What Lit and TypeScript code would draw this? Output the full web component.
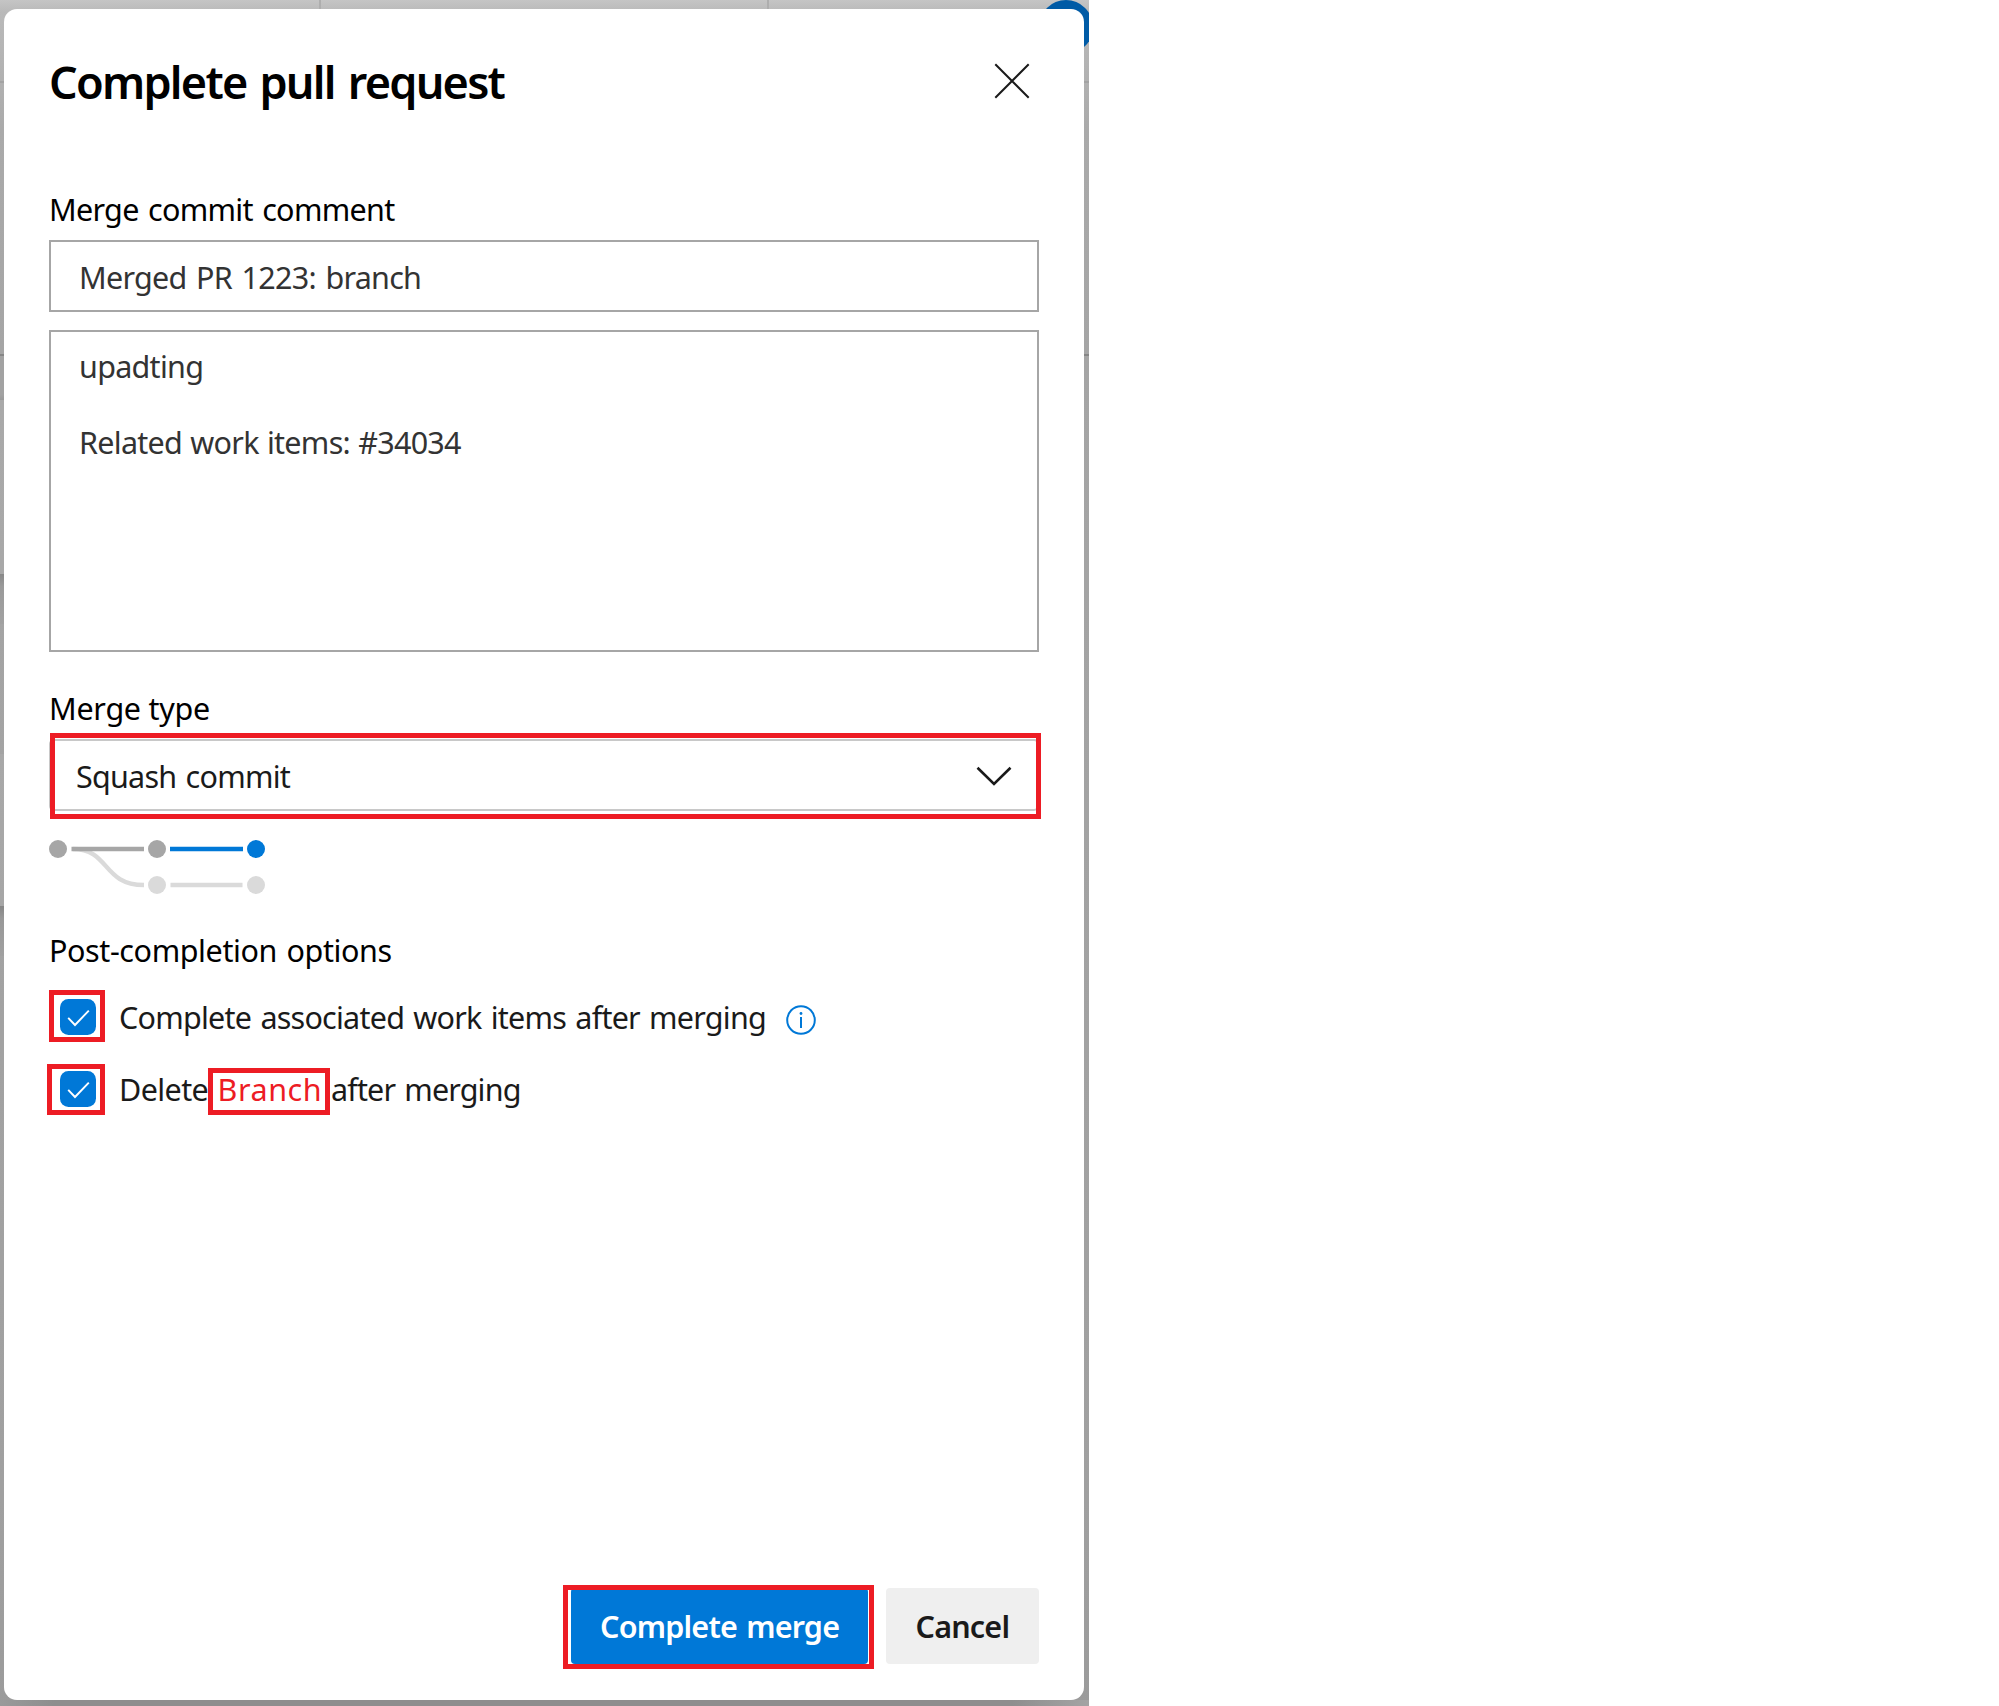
import { LitElement, html, css, svg } from "lit";
import { customElement, property, state } from "lit/decorators.js";

@customElement("option-check")
export class OptionCheck extends LitElement {
  @property({ type: Boolean }) checked = true;

  static styles = css`
    :host { display: block; flex: none; width: 36px; height: 36px; }
    .box { display: block; width: 36px; height: 36px; }
  `;

  render() {
    return html`<svg class="box" viewBox="0 0 36 36" role="checkbox" aria-checked=${this.checked}>
      <rect width="36" height="36" rx="8.5" fill="#0078d7" />
      ${this.checked
        ? svg`<path d="M8.2 18.8 L15 26 L28.8 11.6" fill="none" stroke="#fff" stroke-width="1.9" />`
        : null}
    </svg>`;
  }
}

@customElement("app-root")
export class AppRoot extends LitElement {
  @state() private comment = "Merged PR 1223: branch";
  @state() private mergeType = "Squash commit";

  static styles = css`
    :host {
      display: block;
      background: #fff;
      font-family: "Noto Sans", "Open Sans", sans-serif;
      font-size: 30.5px;
      line-height: 42px;
      letter-spacing: -0.5px;
      word-spacing: 2px;
      color: #1a1a1a;
    }
    * { box-sizing: border-box; }

    .backdrop {
      position: relative;
      overflow: hidden;
      width: 1089px;
      height: 1706px;
      padding: 9px 5px 6px 4px;
      background:
        linear-gradient(#aeaeae, #aeaeae) 319px 0 / 2px 9px no-repeat,
        linear-gradient(#aeaeae, #aeaeae) 767px 0 / 2px 9px no-repeat,
        linear-gradient(#a3a3a3, #a3a3a3) 0 81px / 100% 2px no-repeat,
        linear-gradient(#868686, #868686) 0 354px / 100% 2px no-repeat,
        linear-gradient(#a2a2a2 0, #a2a2a2 88%, #999 100%) 0 356px / 4px 44px no-repeat,
        linear-gradient(#a9a9a9, #a8a8a8) 0 400px / 4px 174px no-repeat,
        linear-gradient(#888, #9a9a9a 25%, #a1a1a1) 0 574px / 4px 50px no-repeat,
        linear-gradient(#a8a8a8, #a6a6a6) 0 754px / 4px 152px no-repeat,
        linear-gradient(#868686, #989898 25%, #a0a0a0) 0 906px / 4px 50px no-repeat,
        linear-gradient(90deg, #9a9a9a, #8e8e8e 5%, #8e8e8e 93%, #a4a4a4) 0 1700px / 100% 6px no-repeat,
        linear-gradient(#c5c5c5 0, #b9b9b9 12px, #b5b5b5 50px, #aaa 130px, #a5a5a5 350px, #a0a0a0 1500px, #9b9b9b 1706px);
    }
    .avatar {
      position: absolute;
      left: 1039px;
      top: 0;
      width: 54px;
      height: 54px;
      border-radius: 50%;
      background: #005ba6;
    }
    .dialog {
      position: relative;
      display: flex;
      flex-direction: column;
      width: 1080px;
      height: 1691px;
      padding: 43px 45px 36px;
      border-radius: 13px;
      background: #fff;
    }

    .head { display: flex; justify-content: space-between; height: 60px; }
    .title {
      margin: 0;
      font-size: 45px;
      line-height: 60px;
      font-weight: 600;
      letter-spacing: -1.75px;
      word-spacing: 3px;
      color: #000;
    }
    .close { width: 36px; height: 36px; margin: 11px 9px 0 0; }

    .label { color: #000; }
    .label.first { margin-top: 76px; letter-spacing: -0.68px; }
    .label.type { margin-top: 35px; letter-spacing: -0.26px; word-spacing: 0; }
    .label.post { margin-top: 31px; letter-spacing: -0.4px; }

    .input {
      height: 72px;
      margin-top: 10px;
      padding: 14px 28px;
      border: 2px solid #a6a6a6;
      color: #333;
      letter-spacing: -0.74px;
      word-spacing: 2.4px;
    }
    .memo {
      height: 322px;
      margin-top: 18px;
      padding: 15px 28px;
      border: 2px solid #a6a6a6;
      line-height: 38px;
      color: #333;
      letter-spacing: -0.72px;
      word-spacing: 1px;
    }
    .select {
      position: relative;
      display: flex;
      justify-content: space-between;
      height: 72px;
      margin-top: 10px;
      padding: 14px 25px;
      border: 2px solid #c8c8c8;
      border-radius: 5px;
      letter-spacing: -0.75px;
    }
    .chevron { width: 36px; height: 20px; margin-top: 11px; }

    .mark { position: absolute; border: 5px solid #ed1c24; }
    .mark-select { left: -1px; top: -8px; width: 991px; height: 86px; }
    .mark-first { left: -11px; top: -9px; width: 56px; height: 52px; }
    .mark-second { left: -13px; top: -7px; width: 58px; height: 51px; }
    .mark-merge { left: -8px; top: -3px; width: 311px; height: 84px; }

    .graph { width: 220px; height: 60px; margin-top: 27px; }

    .options { display: flex; flex-direction: column; gap: 30px; margin: 25px 0 0 11px; }
    .option { display: flex; align-items: center; height: 42px; letter-spacing: -0.76px; white-space: nowrap; }
    .tick { position: relative; margin-right: 23px; }
    .info { width: 32px; height: 32px; margin: 6px 0 0 19px; }
    .delete { width: 89px; letter-spacing: -0.6px; }
    .branch {
      width: 122px;
      height: 47px;
      margin: 5px 1px 0 0;
      border: 5px solid #ed1c24;
      background: #fff;
      color: #ed1c24;
      letter-spacing: 0.57px;
      line-height: 30px;
      padding: 1px 0 0 4.5px;
    }
    .after { letter-spacing: -0.85px; }

    .foot { display: flex; justify-content: flex-end; gap: 18px; margin-top: auto; }
    .btn {
      position: relative;
      height: 76px;
      border-radius: 4px;
      font-weight: 600;
      line-height: 42px;
      padding: 17px 0 0;
      white-space: nowrap;
    }
    .primary { width: 297px; padding-left: 29px; background: #0078d7; color: #fff; letter-spacing: -0.79px; }
    .cancel { width: 153px; padding-left: 29.5px; background: #efefef; letter-spacing: -0.8px; }
  `;

  private renderGraph() {
    return html`<svg class="graph" viewBox="0 0 220 60">
      <g fill="none" stroke-width="4.4">
        <path d="M24 11 C61 11 53 47 95 47" stroke="#dadada" />
        <path d="M121.500 47 H193.500" stroke="#dadada" />
        <path d="M22.500 11 H95" stroke="#a6a6a6" />
        <path d="M121 11 H194" stroke="#0078d7" />
      </g>
      <circle cx="9" cy="11" r="9" fill="#a6a6a6" />
      <circle cx="108" cy="11" r="9" fill="#a6a6a6" />
      <circle cx="207" cy="11" r="9" fill="#0078d7" />
      <circle cx="108" cy="47" r="9" fill="#dadada" />
      <circle cx="207" cy="47" r="9" fill="#dadada" />
    </svg>`;
  }

  render() {
    return html`
      <div class="backdrop">
        <div class="avatar"></div>
        <section class="dialog" role="dialog">
          <header class="head">
            <h1 class="title">Complete pull request</h1>
            <svg class="close" viewBox="0 0 36 36">
              <path d="M1.300 1.300 L34.700 34.700 M34.700 1.300 L1.300 34.700" stroke="#1a1a1a" stroke-width="2" />
            </svg>
          </header>

          <div class="label first">Merge commit comment</div>
          <div class="input">${this.comment}</div>
          <div class="memo">upadting<br /><br />Related work items: #34034</div>

          <div class="label type">Merge type</div>
          <div class="select">
            <span>${this.mergeType}</span>
            <svg class="chevron" viewBox="0 0 36 20">
              <path d="M1.500 1.800 L18 18 L34.500 1.800" fill="none" stroke="#1a1a1a" stroke-width="2.6" />
            </svg>
            <div class="mark mark-select"></div>
          </div>
          ${this.renderGraph()}

          <div class="label post">Post-completion options</div>
          <div class="options">
            <div class="option">
              <div class="tick"><option-check></option-check><div class="mark mark-first"></div></div>
              <span>Complete associated work items after merging</span>
              <svg class="info" viewBox="0 0 32 32">
                <circle cx="16" cy="16" r="13.800" fill="none" stroke="#0078d7" stroke-width="2" />
                <path d="M16 13 V24" stroke="#0078d7" stroke-width="2" />
                <circle cx="16" cy="9.500" r="1.400" fill="#0078d7" />
              </svg>
            </div>
            <div class="option">
              <div class="tick"><option-check></option-check><div class="mark mark-second"></div></div>
              <span class="delete">Delete</span>
              <span class="branch">Branch</span>
              <span class="after">after merging</span>
            </div>
          </div>

          <footer class="foot">
            <div class="btn primary">Complete merge<div class="mark mark-merge"></div></div>
            <div class="btn cancel">Cancel</div>
          </footer>
        </section>
      </div>
    `;
  }
}
